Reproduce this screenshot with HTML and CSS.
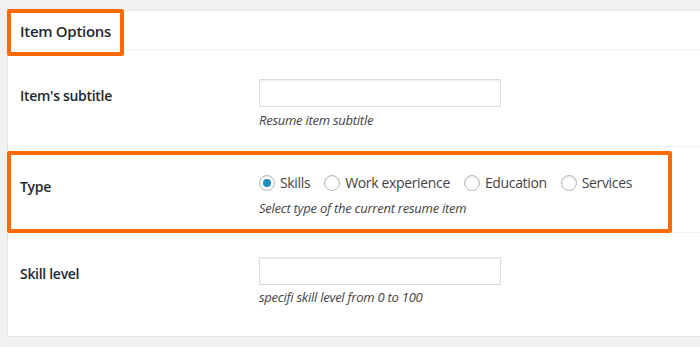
FILE: index.html
```html
<!DOCTYPE html>
<html lang="en">
<head>
    <meta charset="UTF-8">
    <meta name="viewport" content="width=device-width, initial-scale=1.0">
    <title>Item Options</title>
    <link rel="stylesheet" href="styles.css">
</head>
<body>
    <div class="postbox">
        <div class="postbox-header">
            <h2>Item Options</h2>
            <span class="mark mark-header"></span>
        </div>

        <div class="inside">
            <div class="field-row row-subtitle">
                <label class="field-label" for="item_subtitle">Item's subtitle</label>
                <div class="field">
                    <input type="text" id="item_subtitle" class="text-input">
                    <p class="description">Resume item subtitle</p>
                </div>
            </div>

            <div class="field-row row-type">
                <span class="field-label">Type</span>
                <div class="field">
                    <div class="radio-list">
                        <label class="radio"><input type="radio" name="item_type" value="skills" checked> Skills</label>
                        <label class="radio"><input type="radio" name="item_type" value="work"> Work experience</label>
                        <label class="radio"><input type="radio" name="item_type" value="education"> Education</label>
                        <label class="radio"><input type="radio" name="item_type" value="services"> Services</label>
                    </div>
                    <p class="description">Select type of the current resume item</p>
                </div>
                <span class="mark mark-row"></span>
            </div>

            <div class="field-row row-level">
                <label class="field-label" for="skill_level">Skill level</label>
                <div class="field">
                    <input type="text" id="skill_level" class="text-input">
                    <p class="description">specifi skill level from 0 to 100</p>
                </div>
            </div>
        </div>
    </div>
</body>
</html>
```

FILE: styles.css
```css
body {
    font-family: 'Open Sans', 'Noto Sans', sans-serif;
    font-size: 13px;
    color: #23282d;
    background-color: #f1f1f1;
    margin: 0;
    padding: 10px 0 0 7px;
    overflow: hidden;
}

.postbox {
    position: relative;
    background-color: #fff;
    border: 1px solid #e5e5e5;
    box-shadow: 0 1px 1px rgba(0, 0, 0, 0.04);
    margin-right: -20px;
    height: 327px;
    box-sizing: border-box;
}

.postbox-header {
    position: relative;
    height: 38px;
    border-bottom: 1px solid #eee;
}

.postbox-header h2 {
    margin: 0;
    padding-left: 12px;
    font-size: 15px;
    font-weight: 600;
    letter-spacing: -0.3px;
    line-height: 40px;
}

.inside {
    padding-left: 12px;
}

.field-row {
    position: relative;
    display: grid;
    grid-template-columns: 239px 1fr;
    align-items: start;
    border-bottom: 1px solid #efefef;
}

.row-subtitle {
    padding: 29px 0 17px;
}

.row-type {
    padding: 26px 0 15px;
}

.row-level {
    padding: 24px 0 0;
    border-bottom: none;
}

.field-label {
    font-size: 14px;
    font-weight: 600;
    letter-spacing: -0.3px;
    line-height: 20px;
    padding-top: 7px;
}

.row-type .field-label {
    padding-top: 4px;
}

.text-input {
    display: block;
    width: 242px;
    height: 28px;
    margin: 0;
    padding: 3px 5px;
    box-sizing: border-box;
    border: 1px solid #ddd;
    box-shadow: inset 0 1px 2px rgba(0, 0, 0, 0.07);
    font: inherit;
    outline: none;
}

.description {
    margin: 4px 0 0;
    font-style: italic;
    letter-spacing: -0.25px;
    color: #444;
    line-height: 18px;
}

.row-type .description {
    margin-top: 6px;
}

.row-level .description {
    margin-top: 3px;
}

.radio-list {
    display: flex;
    gap: 14px;
    line-height: 20px;
    font-size: 14px;
    letter-spacing: -0.35px;
    color: #444;
}

.radio {
    display: flex;
    align-items: center;
    gap: 5px;
}

.radio input {
    appearance: none;
    -webkit-appearance: none;
    width: 16px;
    height: 16px;
    margin: 0;
    border: 1px solid #b4b9be;
    border-radius: 50%;
    background-color: #fff;
    box-shadow: inset 0 1px 2px rgba(0, 0, 0, 0.1);
    display: grid;
    place-items: center;
}

.radio input:checked::before {
    content: '';
    width: 8px;
    height: 8px;
    border-radius: 50%;
    background-color: #1e8cbe;
}

/* orange highlight frames laid over the screenshot */
.mark {
    position: absolute;
    border: 4px solid #ff6a00;
    border-radius: 2px;
    box-sizing: border-box;
    pointer-events: none;
}

.mark-header {
    left: -1px;
    top: -2px;
    width: 117px;
    height: 47px;
}

.mark-row {
    left: -13px;
    top: 4px;
    width: 665px;
    height: 82px;
}
```
